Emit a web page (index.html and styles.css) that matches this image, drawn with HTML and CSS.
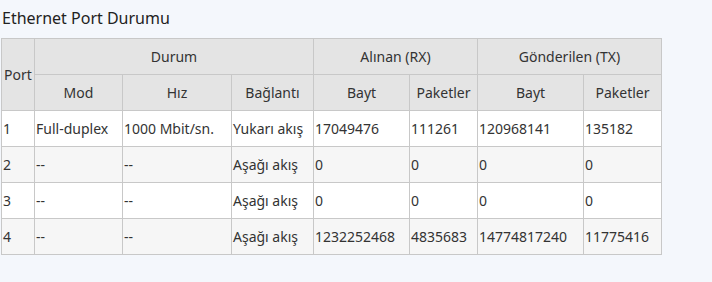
FILE: index.html
```html
<!DOCTYPE html>
<html lang="tr">
<head>
<meta charset="utf-8">
<title>Ethernet Port Durumu</title>
<link rel="stylesheet" href="styles.css">
</head>
<body>
<div class="page">
  <h2 class="title">Ethernet Port Durumu</h2>
  <table class="status">
    <colgroup>
      <col class="c-port"><col class="c-mod"><col class="c-hiz"><col class="c-bag">
      <col class="c-rxb"><col class="c-rxp"><col class="c-txb"><col class="c-txp">
    </colgroup>
    <thead>
      <tr>
        <th rowspan="2">Port</th>
        <th colspan="3">Durum</th>
        <th colspan="2">Alınan (RX)</th>
        <th colspan="2">Gönderilen (TX)</th>
      </tr>
      <tr>
        <th>Mod</th><th>Hız</th><th>Bağlantı</th>
        <th>Bayt</th><th>Paketler</th><th>Bayt</th><th>Paketler</th>
      </tr>
    </thead>
    <tbody>
      <tr><td>1</td><td>Full-duplex</td><td>1000 Mbit/sn.</td><td>Yukarı akış</td><td>17049476</td><td>111261</td><td>120968141</td><td>135182</td></tr>
      <tr><td>2</td><td>--</td><td>--</td><td>Aşağı akış</td><td>0</td><td>0</td><td>0</td><td>0</td></tr>
      <tr><td>3</td><td>--</td><td>--</td><td>Aşağı akış</td><td>0</td><td>0</td><td>0</td><td>0</td></tr>
      <tr><td>4</td><td>--</td><td>--</td><td>Aşağı akış</td><td>1232252468</td><td>4835683</td><td>14774817240</td><td>11775416</td></tr>
    </tbody>
  </table>
</div>
</body>
</html>
```

FILE: styles.css
```css
html, body {
  margin: 0;
  padding: 0;
  background: #f4f7fc;
}
body {
  font-family: "Noto Sans", "Open Sans", sans-serif;
  color: #333333;
  font-size: 14px;
}
.page {
  padding: 0 1px;
}
.title {
  margin: 0;
  padding: 7px 1px 0;
  height: 38px;
  box-sizing: border-box;
  font-size: 16px;
  font-weight: normal;
  line-height: 22px;
  color: #222222;
}
.status {
  border-collapse: collapse;
  table-layout: fixed;
  width: 660px;
  background: #ffffff;
}
.status th, .status td {
  border: 1px solid #c8c8c8;
  height: 36px;
  padding: 0 1px;
  box-sizing: border-box;
  white-space: nowrap;
  overflow: hidden;
}
.status th {
  background: #e4e4e4;
  font-weight: normal;
  text-align: center;
  color: #333333;
}
.status td {
  text-align: left;
}
.status tbody tr:nth-child(even) td {
  background: #f6f6f6;
}
.c-port { width: 33px; }
.c-mod { width: 88px; }
.c-hiz { width: 109px; }
.c-bag { width: 82px; }
.c-rxb { width: 96px; }
.c-rxp { width: 68px; }
.c-txb { width: 106px; }
.c-txp { width: 78px; }
```
